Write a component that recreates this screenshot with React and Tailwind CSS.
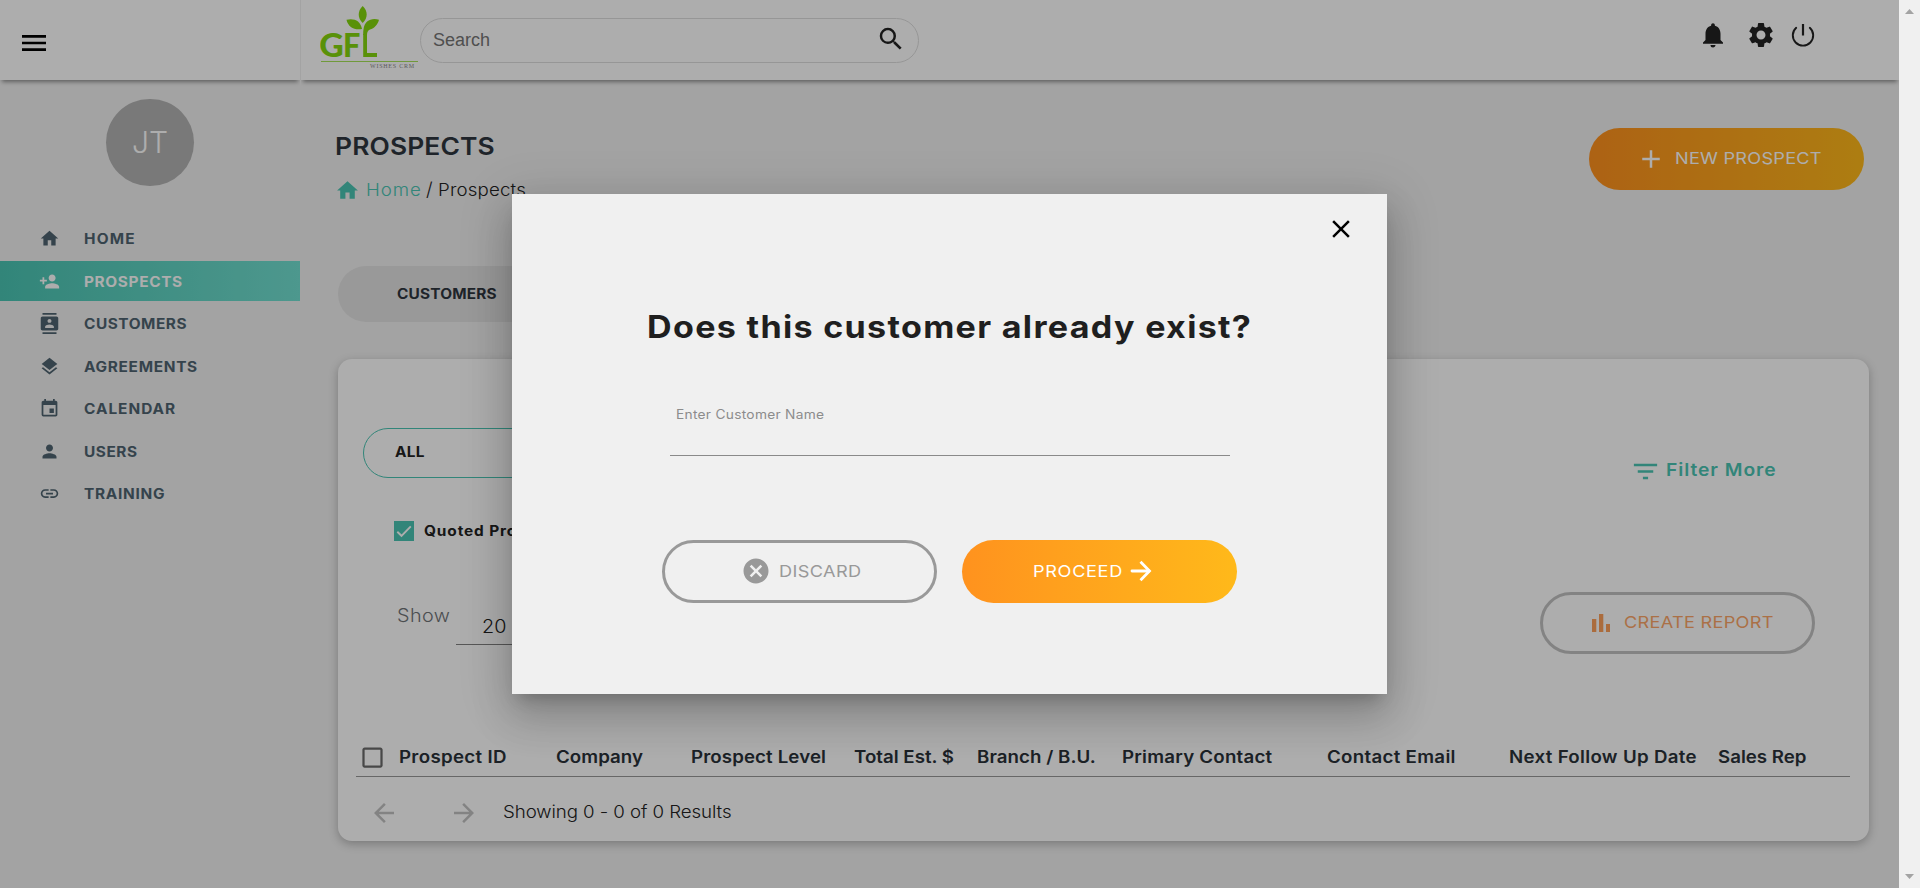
import React from "react";
import {
  MdMenu,
  MdHome,
  MdPersonAdd,
  MdContacts,
  MdLayers,
  MdEvent,
  MdPerson,
  MdLink,
  MdSearch,
  MdNotifications,
  MdSettings,
  MdAdd,
  MdFilterList,
  MdArrowBack,
  MdArrowForward,
  MdCheckBoxOutlineBlank,
  MdClose,
  MdCancel,
} from "react-icons/md";

const NAV = [
  { label: "HOME", Icon: MdHome, tracking: "tracking-[1.05px]" },
  { label: "PROSPECTS", Icon: MdPersonAdd, tracking: "tracking-[0.57px]", active: true },
  { label: "CUSTOMERS", Icon: MdContacts, tracking: "tracking-[0.48px]" },
  { label: "AGREEMENTS", Icon: MdLayers, tracking: "tracking-[0.62px]" },
  { label: "CALENDAR", Icon: MdEvent, tracking: "tracking-[0.89px]" },
  { label: "USERS", Icon: MdPerson, tracking: "tracking-[0.5px]" },
  { label: "TRAINING", Icon: MdLink, tracking: "tracking-[0.64px]" },
];

const COLUMNS = [
  { label: "Prospect ID", tracking: "tracking-[0.28px]" },
  { label: "Company", tracking: "tracking-[0.05px]" },
  { label: "Prospect Level", tracking: "tracking-[0.1px]" },
  { label: "Total Est. $", tracking: "tracking-normal" },
  { label: "Branch / B.U.", tracking: "tracking-[0.05px]" },
  { label: "Primary Contact", tracking: "tracking-[0.2px]" },
  { label: "Contact Email", tracking: "tracking-[0.27px]" },
  { label: "Next Follow Up Date", tracking: "tracking-[0.28px]" },
  { label: "Sales Rep", tracking: "tracking-normal" },
];

function Wide({ className = "", children }) {
  return (
    <span className={"inline-block origin-left scale-x-110 whitespace-nowrap " + className}>{children}</span>
  );
}

function Logo() {
  return (
    <svg width="100" height="72" viewBox="0 0 100 72" className="shrink-0">
      <g fill="#84d60e">
        <path d="M42.7 6C48 11 48 18 42.7 23C37.4 18 37.4 11 42.7 6Z" />
        <path d="M26.5 19.7C34 18 40.5 20.5 42 29C34.5 30.5 28 27 26.5 19.7Z" />
        <path d="M59 19.7C51.5 17.5 44.5 20.5 43.5 29.5C43.2 31 43.200 33 43.2 35L47 35C47 32 48 30.5 50 29.5C54.5 28 57.5 25 59 19.7Z" />
        <path d="M43.2 34H47V53H57V57H43.2Z" />
      </g>
      <text x="-0.8" y="57" fill="#84d60e" fontFamily="Lato" fontWeight="900" fontSize="33" textLength="24.5" lengthAdjust="spacingAndGlyphs">G</text>
      <text x="23" y="57" fill="#84d60e" fontFamily="Lato" fontWeight="900" fontSize="33" textLength="17.3" lengthAdjust="spacingAndGlyphs">F</text>
      <rect x="1" y="61" width="97" height="1" fill="#a6e257" />
      <text x="50" y="68" fill="#8a8a8a" fontFamily="Liberation Serif" fontSize="6" textLength="44">WISHES CRM</text>
    </svg>
  );
}

function PowerIcon() {
  return (
    <svg width="24" height="24" viewBox="0 0 24 24" fill="none" stroke="#222" strokeWidth="1.9" strokeLinecap="round">
      <path d="M5.2 4.8A10.2 10.2 0 1 0 18.8 4.8" />
      <path d="M12 1V12.5" strokeWidth="2.2" strokeLinecap="butt" />
    </svg>
  );
}

function Sidebar() {
  return (
    <aside className="flex h-full w-[300px] shrink-0 flex-col">
      <div className="flex h-20 shrink-0 items-center bg-white pl-[18px] pt-[5px] shadow-[0_4px_4px_-2px_rgba(0,0,0,0.4)] [clip-path:inset(0_0_-8px_0)]">
        <MdMenu size={32} className="text-black" />
      </div>
      <div className="mt-[19px] flex h-[87px] w-[88px] items-center justify-center self-center rounded-full bg-[#b3b3b3] text-[30px] font-light text-white">
        JT
      </div>
      <nav className="mt-[32.5px] flex flex-col gap-[2.5px]">
        {NAV.map(({ label, Icon, tracking, active }) => (
          <a
            key={label}
            className={
              "flex h-10 items-center pl-[39px] text-[14px] font-bold " +
              (active ? "bg-linear-to-r from-[#4ac5b3] to-[#72e0d1] text-white" : "text-[#4f6470]")
            }
          >
            <Icon size={21} />
            <Wide className={"ml-[23.5px] " + tracking}>{label}</Wide>
          </a>
        ))}
      </nav>
    </aside>
  );
}

function TopBar() {
  return (
    <header className="ml-px flex h-20 shrink-0 items-start bg-white pl-[19px] shadow-[0_4px_4px_-2px_rgba(0,0,0,0.4)] [clip-path:inset(0_0_-8px_0)]">
      <Logo />
      <div className="mt-[18px] flex h-[45px] w-[499px] items-center rounded-full border border-[#dedede] pl-[12px] pr-[12px]">
        <span className="-mt-[2px] flex-1 font-['Liberation_Sans',sans-serif] text-[18px] leading-none text-[#757575]">Search</span>
        <MdSearch size={30} className="-mt-1 text-[#222]" />
      </div>
      <div className="ml-auto flex items-center pr-[84px] pt-5 text-[#222]">
        <MdNotifications size={30} />
        <MdSettings size={30} className="ml-[18px]" />
        <span className="ml-[15px]">
          <PowerIcon />
        </span>
      </div>
    </header>
  );
}

function CardTop() {
  return (
    <div className="flex justify-between pl-[25px] pr-[54px] pt-[69px]">
      <div className="flex flex-col">
        <div className="flex h-[50px] w-[420px] items-center rounded-full border border-[#4ac5b3] pb-[3px] pl-[31px] text-[14px] font-bold text-[#222]">
          <Wide className="tracking-[0.2px]">ALL</Wide>
        </div>
        <label className="mt-[43px] flex h-5 items-center pl-[31px] text-[14px] font-bold text-[#222]">
          <svg width="20" height="20" viewBox="0 0 20 20" className="shrink-0">
            <rect width="20" height="20" fill="#4ac5b3" />
            <path d="M3.3 10.8L7.5 14.8L16.8 5.3" fill="none" stroke="#fff" strokeWidth="1.9" />
          </svg>
          <Wide className="-mt-px ml-[10px] tracking-[0.8px]">Quoted Prospects</Wide>
        </label>
        <div className="mt-[59px] flex h-[45px] items-start pl-[33.5px] text-[18px] font-light">
          <span className="h-[31px] w-[59.5px] leading-[31px] text-[#6f7377]">
            <Wide className="tracking-[0.4px]">Show</Wide>
          </span>
          <span className="flex h-[45px] w-[90px] items-end border-b border-[#808080] pb-[8px] pl-[26px] leading-[18px] text-[#222]">
            <Wide>20</Wide>
          </span>
        </div>
      </div>
      <div className="flex flex-col items-end">
        <button className="mt-[27px] flex h-8 w-[185px] items-center text-[17.5px] font-semibold text-[#4ac5b3]">
          <MdFilterList size={31} className="shrink-0" />
          <Wide className="-mt-[2px] ml-[4.5px] tracking-[0.85px]">Filter More</Wide>
        </button>
        <button className="mt-[105px] flex h-[62px] w-[275px] items-center rounded-full border-[3px] border-[#c2c2c2] pl-[49px] text-[16.5px] text-[#fca668]">
          <svg width="18" height="18" viewBox="0 0 18 18" fill="#fca05a">
            <rect x="0" y="5" width="4.3" height="13" />
            <rect x="7" y="0" width="4.3" height="18" />
            <rect x="14" y="10" width="4" height="8" />
          </svg>
          <Wide className="-mt-px ml-[14px] tracking-[0.26px]">CREATE REPORT</Wide>
        </button>
      </div>
    </div>
  );
}

function ProspectTable() {
  return (
    <div className="mt-auto">
      <div className="ml-[18px] mr-[19px] grid h-[36px] grid-cols-[42.5px_157px_135px_163px_123px_145.5px_205px_182px_209px_1fr] border-b border-[#999] text-[17px] font-semibold text-[#2a3138]">
        <MdCheckBoxOutlineBlank size={27} className="ml-[3px] mt-[3px] text-[#6b6b6b]" />
        {COLUMNS.map((c) => (
          <Wide key={c.label} className={"justify-self-start leading-[33px] " + c.tracking}>
            {c.label}
          </Wide>
        ))}
      </div>
      <div className="flex h-[64px] items-center pl-[31px] pt-2 text-[17px]">
        <MdArrowBack size={30} className="text-[#c2c2c2]" />
        <MdArrowForward size={30} className="ml-[49.5px] text-[#c2c2c2]" />
        <Wide className="ml-[24px] font-light tracking-[-0.07px] text-[#222]">Showing 0 - 0 of 0 Results</Wide>
      </div>
    </div>
  );
}

function MainPanel() {
  return (
    <main className="flex flex-1 flex-col">
      <TopBar />
      <div className="flex flex-col pl-[38px] pr-[30px] pt-12">
        <div className="flex h-[74px] items-start justify-between pr-[5px]">
          <div className="-ml-[4px] pt-[4px]">
            <h1 className="h-[30px] pl-[0.5px] text-[24px] font-semibold leading-[30px] text-[#2f363e]">
              <Wide className="tracking-[0.11px]">PROSPECTS</Wide>
            </h1>
            <div className="mt-[16px] flex h-6 items-center text-[17px] font-light leading-6 text-[#222]">
              <MdHome size={25} className="ml-px text-[#4ac5b3]" />
              <span className="ml-[6px] w-[60px] text-[#4ac5b3]">
                <Wide className="tracking-[0.85px]">Home</Wide>
              </span>
              <span className="w-[12px] text-[19px]">/</span>
              <Wide className="tracking-[0.15px]">Prospects</Wide>
            </div>
          </div>
          <button className="flex h-[62px] w-[275px] items-center rounded-full bg-linear-to-r from-[#ff911e] to-[#ffb91a] pl-[47px] text-[16.5px] text-white">
            <MdAdd size={30} />
            <Wide className="-mt-[2px] ml-[8.5px] tracking-[0.22px]">NEW PROSPECT</Wide>
          </button>
        </div>
        <div className="mt-16 flex h-14 w-[700px] items-center rounded-full bg-[#e2e2e2] pl-[59px] text-[14px] font-bold text-[#2f363e]">
          <Wide className="-mt-px tracking-[0.15px]">CUSTOMERS</Wide>
        </div>
        <section className="mt-[37px] flex h-[482px] flex-col rounded-[14px] bg-white shadow-[0_3px_10px_rgba(0,0,0,0.25)]">
          <CardTop />
          <ProspectTable />
        </section>
      </div>
    </main>
  );
}

function CustomerDialog() {
  return (
    <div className="flex h-[500px] w-[875px] flex-col bg-[#f0f0f0] shadow-[0_11px_15px_-7px_rgba(0,0,0,0.2),0_24px_38px_3px_rgba(0,0,0,0.14),0_9px_46px_8px_rgba(0,0,0,0.12)]">
      <div className="flex justify-end pr-[31px] pt-5">
        <MdClose size={30} className="text-black" />
      </div>
      <h2 className="mt-[63px] h-[39px] pl-[135px] text-[31px] font-bold leading-[39px] text-[#1f1f1f]">
        <Wide className="tracking-[1.18px]">Does this customer already exist?</Wide>
      </h2>
      <div className="ml-[158px] mt-[58px] h-[52px] w-[560px] border-b border-[#8a8a8a] pl-[5.5px] text-[12.5px] leading-[21px] text-[#8c8c8c]">
        <Wide className="tracking-[0.25px]">Enter Customer Name</Wide>
      </div>
      <div className="mt-[84px] flex justify-center gap-[25px] text-[16.5px]">
        <button className="flex h-[63px] w-[275px] items-center rounded-full border-[3px] border-[#999] pl-[76px] text-[#999]">
          <MdCancel size={30} className="-mt-px" />
          <Wide className="-mt-px ml-[8px] tracking-[0.35px]">DISCARD</Wide>
        </button>
        <button className="flex h-[63px] w-[275px] items-center rounded-full bg-linear-to-r from-[#ff921e] to-[#ffb91a] pl-[71px] text-white">
          <span className="w-[97px] text-left">
            <Wide className="-mt-px tracking-[0.6px]">PROCEED</Wide>
          </span>
          <svg width="22" height="22" viewBox="0 0 22 22" fill="none" stroke="#fff" strokeWidth="2.8" className="-mt-px">
            <path d="M2 11H19" strokeLinecap="round" />
            <path d="M10.5 1.8L19.5 11L10.5 20.2" />
          </svg>
        </button>
      </div>
    </div>
  );
}

function Scrollbar() {
  return (
    <div className="flex h-full w-[21px] shrink-0 flex-col items-center justify-between bg-[#f0f0f0] pb-[9px] pt-[9px]">
      <svg width="9" height="5" viewBox="0 0 9 5" fill="#a3a3a3">
        <path d="M0 5L4.5 0L9 5Z" />
      </svg>
      <svg width="9" height="5" viewBox="0 0 9 5" fill="#a3a3a3">
        <path d="M0 0L4.5 5L9 0Z" />
      </svg>
    </div>
  );
}

export default function App() {
  return (
    <div className="flex h-[888px] w-[1920px] overflow-hidden font-['Inter',sans-serif]">
      <div className="relative flex h-full w-[1899px] overflow-hidden bg-[#f0f0f0]">
        <Sidebar />
        <MainPanel />
        <div className="absolute inset-0 flex items-center justify-center bg-black/32">
          <CustomerDialog />
        </div>
      </div>
      <Scrollbar />
    </div>
  );
}
